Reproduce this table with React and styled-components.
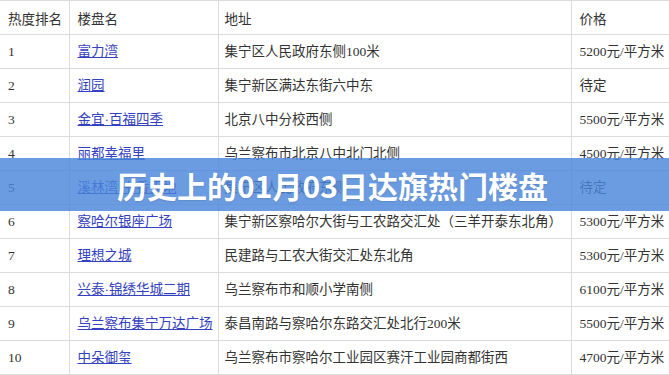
import React from "react";
import styled, { createGlobalStyle } from "styled-components";

const Global = createGlobalStyle`
  html, body { margin: 0; padding: 0; background: #fff; }
  body { width: 669px; height: 375px; overflow: hidden; }
`;

const Page = styled.div`
  position: relative;
  width: 669px;
  height: 375px;
  overflow: hidden;
  font-family: "Liberation Serif", "Noto Sans CJK SC", serif;
  font-size: 13.5px;
  color: #333;
`;

const Table = styled.table`
  border-collapse: collapse;
  table-layout: fixed;
  width: 670px;
`;

const Col = styled.col`
  width: ${(p) => p.$w}px;
`;

const Cell = styled.td`
  border: 1px solid #dcdcdc;
  height: 34px;
  padding: 0 0 0 ${(p) => p.$pad ?? 8}px;
  box-sizing: border-box;
  vertical-align: middle;
  white-space: nowrap;
  overflow: hidden;
  line-height: 16px;
  text-align: left;
  font-weight: 400;
  &:first-child { border-left: none; }
`;

const HeadCell = styled(Cell).attrs({ as: "th" })`
  font-family: "Noto Sans CJK SC", sans-serif;
`;

const Link = styled.a`
  color: #3340c0;
  text-decoration: underline;
`;

const Banner = styled.div`
  position: absolute;
  left: 0;
  right: 0;
  top: 158px;
  height: 53px;
  background: rgba(74, 134, 218, 0.82);
  display: flex;
  align-items: center;
  justify-content: center;
`;

const Title = styled.h1`
  margin: 0 0 0 -4px;
  font-family: "Noto Sans CJK SC", "Noto Sans", sans-serif;
  font-weight: 700;
  font-size: 30px;
  line-height: 1;
  color: #fff;
  text-shadow: 0 1px 2px rgba(0, 0, 0, 0.12);
`;

const cols = [69, 149, 353, 99];

const rows = [
  ["1", "富力湾", "集宁区人民政府东侧100米", "5200元/平方米"],
  ["2", "润园", "集宁新区满达东街六中东", "待定"],
  ["3", "金宜·百福四季", "北京八中分校西侧", "5500元/平方米"],
  ["4", "丽都幸福里", "乌兰察布市北京八中北门北侧", "4500元/平方米"],
  ["5", "溪林湾·书香天地", "集宁区人民政府东侧", "待定"],
  ["6", "察哈尔银座广场", "集宁新区察哈尔大街与工农路交汇处（三羊开泰东北角）", "5300元/平方米"],
  ["7", "理想之城", "民建路与工农大街交汇处东北角", "5300元/平方米"],
  ["8", "兴泰·锦绣华城二期", "乌兰察布市和顺小学南侧", "6100元/平方米"],
  ["9", "乌兰察布集宁万达广场", "泰昌南路与察哈尔东路交汇处北行200米", "5500元/平方米"],
  ["10", "中朵御玺", "乌兰察布市察哈尔工业园区赛汗工业园商都街西", "4700元/平方米"],
];

export default function App() {
  return (
    <>
      <Global />
      <Page>
        <Table>
          <colgroup>
            {cols.map((w, i) => (
              <Col key={i} $w={w} />
            ))}
          </colgroup>
          <thead>
            <tr>
              <HeadCell>热度排名</HeadCell>
              <HeadCell>楼盘名</HeadCell>
              <HeadCell $pad={6}>地址</HeadCell>
              <HeadCell>价格</HeadCell>
            </tr>
          </thead>
          <tbody>
            {rows.map((r) => (
              <tr key={r[0]}>
                <Cell>{r[0]}</Cell>
                <Cell>
                  <Link href="#">{r[1]}</Link>
                </Cell>
                <Cell $pad={6}>{r[2]}</Cell>
                <Cell>{r[3]}</Cell>
              </tr>
            ))}
          </tbody>
        </Table>
        <Banner>
          <Title>历史上的01月03日达旗热门楼盘</Title>
        </Banner>
      </Page>
    </>
  );
}
